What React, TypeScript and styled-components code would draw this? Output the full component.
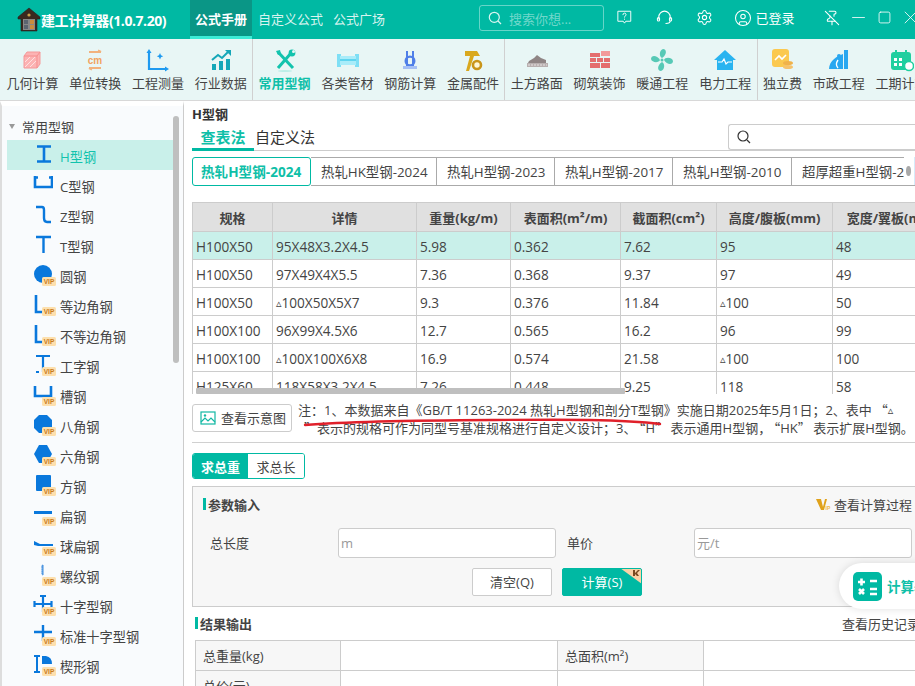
import React from "react";
import styled, { createGlobalStyle } from "styled-components";
import { Settings, CircleUser, PinOff } from "lucide-react";

const TEAL = "#00b9a3";
const FONT = `"Open Sans","Noto Sans CJK SC",sans-serif`;

const Global = createGlobalStyle`
  html, body { margin: 0; padding: 0; background: #fff; overflow: hidden; }
  * { box-sizing: border-box; }
  body { font-family: ${FONT}; font-size: 13px; color: #333; }
`;

const Page = styled.div`
  width: 915px; height: 686px; overflow: hidden; position: relative;
  display: flex; flex-direction: column; background: #fff;
`;

/* ---------- title bar ---------- */
const TitleBar = styled.header`
  height: 39px; flex: none; background: ${TEAL}; display: flex; align-items: stretch; color: #fff; overflow: hidden;
`;
const Brand = styled.div`
  width: 190px; flex: none; display: flex; align-items: center; padding-left: 17px;
  font-size: 14px; font-weight: 700; letter-spacing: -0.42px; white-space: nowrap;
`;
const TopTab = styled.div<{ $on?: boolean }>`
  display: flex; align-items: center; justify-content: center;
  height: 39px; font-size: 13px; white-space: nowrap; flex: none;
  width: ${p => (p.$on ? "62px" : "auto")};
  margin-left: ${p => (p.$on ? "0" : "6px")};
  margin-right: ${p => (p.$on ? "0" : "4px")};
  font-weight: ${p => (p.$on ? 700 : 400)};
  color: ${p => (p.$on ? "#fff" : "rgba(255,255,255,.85)")};
  background: ${p => (p.$on ? "#0a9686" : "transparent")};
  border-bottom: 3px solid ${p => (p.$on ? "#3debd6" : "transparent")};
`;
const SearchTop = styled.div`
  margin: 5px 0 0 90px; width: 125px; height: 26px; flex: none;
  border: 1px solid rgba(255,255,255,.4); border-radius: 3px;
  display: flex; align-items: center; gap: 7px; padding-left: 8px;
  font-size: 13px; color: rgba(255,255,255,.45);
`;
const TopIcons = styled.div`
  display: flex; align-items: center; flex: none; height: 35px;
`;
const TopIcon = styled.span<{ $w: number; $ml?: number }>`
  width: ${p => p.$w}px; margin-left: ${p => p.$ml ?? 0}px; flex: none; display: flex; align-items: center; justify-content: center; gap: 4px;
  font-size: 13px; white-space: nowrap;
`;

/* ---------- toolbar ---------- */
const Toolbar = styled.nav`
  height: 62px; flex: none; background: #e8f6f5; display: flex; align-items: stretch; padding-left: 1px;
  border-bottom: 1px solid #d8d8d8; overflow: hidden;
`;
const ToolGroup = styled.div`
  display: flex; border-right: 1px solid #d0d0d0; flex: none;
  &:last-child { border-right: 0; }
`;
const Tool = styled.div<{ $on?: boolean }>`
  display: flex; flex-direction: column; align-items: center; padding: 9px 5.4px 0; flex: none;
  font-size: 13px; line-height: 18px; white-space: nowrap;
  color: ${p => (p.$on ? "#0fbfa8" : "#444")};
  font-weight: ${p => (p.$on ? 700 : 400)};
  svg { width: 24px; height: 24px; margin-bottom: 2px; display: block; }
`;

/* ---------- body ---------- */
const Body = styled.div`flex: 1; display: flex; min-height: 0;`;
const Sidebar = styled.aside`
  width: 184px; flex: none; position: relative; background: #f9fbfd; padding: 12px 0 0 5px;
  border-left: 2px solid #ddd; border-right: 1px solid #ccc;
  border-top: 5px solid #fff; margin-right: 2px;
`;
const SideHead = styled.div`
  height: 24px; display: flex; align-items: center; gap: 7px; color: #444; font-size: 13px;
  margin-top: -4px; margin-bottom: 2px;
`;
const Caret = styled.i`
  width: 0; height: 0; border-left: 3.5px solid transparent; border-right: 3.5px solid transparent;
  border-top: 5px solid #999; margin-left: 2px;
`;
const SideItem = styled.div<{ $on?: boolean }>`
  width: 166px; height: 30px; display: flex; align-items: center; padding: 2px 0 0 26px; gap: 6px;
  font-size: 13.2px; white-space: nowrap;
  background: ${p => (p.$on ? "#c9f0ea" : "transparent")};
  color: ${p => (p.$on ? "#12c3ad" : "#444")};
`;
const IconBox = styled.span`
  width: 21px; height: 22px; position: relative; flex: none; display: block; margin-top: -2px;
  svg { display: block; }
`;
const Vip = styled.b`
  position: absolute; right: -2px; bottom: 0; height: 9px; width: 14px; background: #fde0ae; color: #c87a1c;
  font: 700 6.5px/9px "Liberation Sans", sans-serif; text-align: center; border-radius: 1.5px;
`;
const SideBarThumb = styled.div`
  position: absolute; left: 171px; top: 10px; width: 6px; height: 247px; background: #bfbfbf; border-radius: 3px;
`;

const Main = styled.main`
  flex: 1; min-width: 0; position: relative; overflow: hidden; padding: 4px 0 0 6px;
`;
const Heading = styled.div`
  font-size: 13px; font-weight: 700; line-height: 18px; color: #333;
`;
const TabRow = styled.div`
  height: 26px; margin-top: 2px; display: flex; align-items: flex-end; border-bottom: 1px solid #ccc; position: relative;
`;
const Tab = styled.div<{ $on?: boolean }>`
  height: 26px; font-size: 15px; line-height: 24px; text-align: center; white-space: nowrap;
  width: ${p => (p.$on ? "62px" : "auto")};
  margin-left: ${p => (p.$on ? 0 : "1px")};
  font-weight: ${p => (p.$on ? 700 : 400)};
  color: ${p => (p.$on ? "#0fbfa8" : "#333")};
  border-bottom: ${p => (p.$on ? "3px solid #00b9a3" : "0")};
  margin-bottom: -1px;
`;
const TabSearch = styled.div`
  position: absolute; left: 536px; top: -1px; width: 200px; height: 26px; border: 1px solid #ccc; border-radius: 3px 0 0 3px;
  border-right: 0; display: flex; align-items: center; padding-left: 8px; background: #fff;
`;
const Segs = styled.div`
  display: flex; margin-top: 6px; height: 30px; overflow: hidden; position: relative;
`;
const Seg = styled.div<{ $on?: boolean; $w: number }>`
  width: ${p => p.$w}px; flex: none; height: 29px; display: flex; align-items: center; padding: 0 0 2px ${p => (p.$on ? 8 : 10)}px;
  font-size: ${p => (p.$on ? 13.6 : 13.4)}px; white-space: nowrap; overflow: hidden; background: #fff;
  border: 1px solid ${p => (p.$on ? "#00b9a3" : "#aaa")};
  border-left-width: ${p => (p.$on ? 1 : 0)}px;
  border-radius: ${p => (p.$on ? "3px" : 0)};
  color: ${p => (p.$on ? "#0fbfa8" : "#444")};
  font-weight: ${p => (p.$on ? 700 : 400)};
`;
const SegHint = styled.div`
  position: absolute; right: 0; top: 0; width: 11px; height: 28px; background: #fff; display: flex; align-items: center;
  border-right: 1px solid #d5ecfb; padding-left: 2px;
  &::before { content: ""; width: 5px; height: 10px; border-radius: 50%; background: #a8a8a8; display: block; }
`;
const TableWrap = styled.div`
  margin-top: 15px; height: 192px; overflow: hidden; position: relative;
`;
const DataTable = styled.table`
  border-collapse: collapse; table-layout: fixed; width: 760px; font-size: 13.6px;
  border-top: 1px solid #ccc; border-left: 1px solid #ccc;
`;
const Th = styled.th<{ $w: number }>`
  width: ${p => p.$w}px; height: 29px; padding: 0; background: #e0e0e0; font-weight: 700; color: #444; border: 1px solid #ccc; font-size: 13px;
  white-space: nowrap; overflow: hidden;
`;
const Tr = styled.tr<{ $on?: boolean }>`
  background: ${p => (p.$on ? "#c9f0ea" : "#fff")};
`;
const Td = styled.td`
  height: 28px; padding: 1px 3px 0; border: 1px solid #ccc; color: #444; white-space: nowrap; overflow: hidden;
`;
const Thumb = styled.div`
  position: absolute; left: 4px; bottom: 0; width: 429px; height: 6px; background: #bfbfbf; border-radius: 1px;
`;
const NoteRow = styled.div`
  display: flex; margin-top: 8px; gap: 6px; height: 41px; border-bottom: 1px solid #d0d0d0; position: relative;
`;
const PicBtn = styled.div`
  width: 100px; height: 28px; flex: none; margin-top: 2px; border: 1px solid #ccc; border-radius: 3px; display: flex; align-items: center;
  padding: 0 0 1px 7px; gap: 5px; font-size: 13px; color: #444;
`;
const Note = styled.div`
  width: 620px; flex: none; font-size: 13px; line-height: 17px; color: #444; margin-top: -1px; white-space: nowrap;
`;
const Tri = styled.span`font-size: 11px; vertical-align: 1px; font-family: "DejaVu Sans", sans-serif;`;
const Quote = styled.span<{ $l?: number; $r?: number }>`
  font-family: "Noto Sans CJK SC", sans-serif;
  margin-left: ${p => p.$l ?? 0}px; margin-right: ${p => p.$r ?? 0}px;
`;
const RedLine = styled.svg`
  position: absolute; left: 0; top: 0; width: 723px; height: 40px; pointer-events: none;
`;
const Mode = styled.div`
  display: flex; width: 113px; height: 26px; margin-top: 10px; border: 1px solid #00b9a3; border-radius: 3px; overflow: hidden;
`;
const ModeBtn = styled.div<{ $on?: boolean }>`
  flex: ${p => (p.$on ? "0 0 55px" : "1")}; display: flex; align-items: center; justify-content: center; font-size: 13px;
  background: ${p => (p.$on ? "#00b9a3" : "#fff")};
  color: ${p => (p.$on ? "#fff" : "#444")}; font-weight: ${p => (p.$on ? 700 : 400)};
`;
const Panel = styled.section`
  margin-top: 7px; height: 121px; background: #f7f7f7; border: 1px solid #ccc; border-right: 0; padding: 8px 0 0 10px;
`;
const SecHead = styled.div`
  display: flex; align-items: center; height: 18px; font-weight: 700; font-size: 13px; color: #444; justify-content: space-between;
`;
const SecTitle = styled.span`
  display: flex; align-items: center; gap: 2px;
  &::before { content: ""; width: 3px; height: 12px; background: #00b9a3; display: block; }
`;
const SecLink = styled.span<{ $mr: number }>`
  display: flex; align-items: center; gap: 3px; font-weight: 400; font-size: 13px; color: #444; white-space: nowrap; margin-right: ${p => p.$mr}px;
`;
const Fields = styled.div`
  display: grid; grid-template-columns: 135px 218px 138px 218px; margin-top: 15px; align-items: center;
`;
const Label = styled.span<{ $pl: number }>`font-size: 13px; color: #444; padding: 0 0 2px ${p => p.$pl}px;`;
const Input = styled.div`
  height: 30px; background: #fff; border: 1px solid #ccc; border-radius: 3px; color: #999; font-size: 13px; display: flex; align-items: center; padding: 0 0 1px 2px;
`;
const Actions = styled.div`
  display: flex; gap: 10px; margin: 10px 0 0 269px;
`;
const Btn = styled.div<{ $pri?: boolean }>`
  width: 80px; height: 28px; border-radius: 2px; display: flex; align-items: center; justify-content: center; font-size: 13px; position: relative;
  padding-bottom: 2px;
  background: ${p => (p.$pri ? "#00b9a3" : "#fff")};
  color: ${p => (p.$pri ? "#fff" : "#444")};
  border: 1px solid ${p => (p.$pri ? "#00b9a3" : "#ccc")};
  overflow: hidden;
`;
const Corner = styled.svg`position: absolute; right: -1px; top: -1px;`;
const Result = styled.section`
  padding: 7px 0 0 3px; width: 730px;
`;
const ResultHead = styled(SecHead)`
  margin-bottom: 8px;
`;
const ResTable = styled.div`
  display: grid; grid-template-columns: 145px 217px 146px 1fr; border-top: 1px solid #ccc; border-left: 1px solid #ccc; width: 730px;
`;
const ResCell = styled.div<{ $key?: boolean }>`
  height: 30px; display: flex; align-items: center; padding-left: 7px; font-size: 13px; color: #444;
  background: ${p => (p.$key ? "#f7f7f7" : "#fff")};
  border-right: 1px solid #ccc; border-bottom: 1px solid #ccc;
`;
const Float = styled.div`
  position: absolute; left: 653px; top: 462px; width: 100px; height: 46px; background: #fff; border-radius: 23px 0 0 23px;
  box-shadow: 0 0 8px rgba(0,0,0,.12); display: flex; align-items: center; padding-left: 14px; gap: 5px;
  color: #0fbfa8; font-weight: 700; font-size: 13.5px; white-space: nowrap; overflow: hidden;
`;

/* ---------- icons ---------- */
const S = (p: React.SVGProps<SVGSVGElement>) => <svg viewBox="0 0 24 24" fill="none" {...p} />;
const W = { stroke: "#fff", strokeWidth: 1.5, strokeLinecap: "round", strokeLinejoin: "round", fill: "none" } as const;

const Logo = () => (
  <svg width="24" height="26" viewBox="0 0 24 26" style={{ flex: "none" }}>
    <path d="M12 1 1 10v2h3v12h16V12h3v-2z" fill="#3a2a20" stroke="#222" strokeWidth=".6" />
    <rect x="6" y="12" width="12" height="11" fill="#888" />
    <rect x="7" y="13" width="4" height="4" fill="#5b6470" />
    <rect x="13" y="13" width="4" height="4" fill="#c98d3c" />
    <rect x="7" y="18" width="4" height="4" fill="#5b6470" />
    <rect x="13" y="18" width="4" height="4" fill="#c98d3c" />
    <circle cx="12" cy="8" r="1.6" fill="#c9a04a" />
  </svg>
);

const icons = {
  cube: <S><path d="M4 8l3-4h13v12l-3 4H4z" fill="#fcb3b3" stroke="#f59a9a" /><path d="M4 8h13v12M17 8l3-4" stroke="#f58f8f" /><path d="M5 14l5-5M5 19l10-10M10 19l6-6" stroke="#fde1e1" /></S>,
  cm: <S><path d="M6 4h12M18 4l-3-1.5M6 20h12M6 20l3 1.5" stroke="#f2b27c" strokeWidth="2" /><text x="12" y="16" textAnchor="middle" fontFamily="Liberation Sans" fontWeight="700" fontSize="10" fill="#f2a35e">cm</text></S>,
  axis: <S><path d="M3 4v17h17" stroke="#1e9af0" strokeWidth="2.2" /><path d="M3 1l-2.5 4h5zM23 21l-4-2.5v5z" fill="#1e9af0" /><path d="M14 5l1 2.2 2.2 1-2.2 1-1 2.2-1-2.2-2.2-1 2.2-1z" fill="#1e9af0" /></S>,
  chart: <S><rect x="3" y="16" width="4" height="6" fill="#14a7b8" /><rect x="10" y="13" width="4" height="9" fill="#14a7b8" /><rect x="17" y="11" width="4" height="11" fill="#14a7b8" /><path d="M3 12l6-5 4 3 7-7" stroke="#14a7b8" strokeWidth="2" /><path d="M16 2h6v6z" fill="#14a7b8" /></S>,
  tools: <S><path d="M5 4l15 16M19 4L5 20" stroke="#12c3ad" strokeWidth="3" /><path d="M3 3l4-1 1 4-3 1z" fill="#12c3ad" /><circle cx="19" cy="5" r="3.4" fill="#12c3ad" /><circle cx="20.5" cy="3.4" r="1.5" fill="#e8f6f5" /><ellipse cx="12" cy="23" rx="7" ry="1" fill="#bdeee7" /></S>,
  beam: <S><rect x="2" y="6" width="4" height="13" fill="#7edff5" /><rect x="20" y="6" width="4" height="13" fill="#7edff5" /><rect x="5" y="8" width="16" height="9" fill="#a9ecf9" /><rect x="5" y="11" width="16" height="2" fill="#5fd5ef" /></S>,
  rebar: <S><path d="M9 3v15M15 3v15" stroke="#4f7fe8" strokeWidth="2" /><circle cx="12" cy="13" r="4.4" stroke="#4f7fe8" strokeWidth="2.2" /><rect x="5" y="18" width="14" height="3" fill="#a5c0f5" /></S>,
  hammer: <S><path d="M4 3h12l3 5h-6l-5 15H5l4-15H4z" fill="#d9a81e" /><circle cx="16" cy="17" r="4" stroke="#c9951a" strokeWidth="2.6" fill="#fff6d5" /></S>,
  road: <S><path d="M4 13l5-3 3-3 4 3 5 2v3H3z" fill="#8f8585" /><rect x="2" y="15" width="21" height="4" fill="#b8b0b0" /><path d="M3 17h19" stroke="#e8e2e2" strokeDasharray="2 1" /></S>,
  brick: <S><g fill="#e46e6e"><rect x="2" y="5" width="10" height="4" /><rect x="13" y="3" width="9" height="5" fill="#f29a9a" /><rect x="2" y="10" width="6" height="4" /><rect x="9" y="10" width="6" height="4" /><rect x="16" y="10" width="6" height="4" /><rect x="2" y="15" width="10" height="5" /><rect x="13" y="15" width="9" height="5" /></g></S>,
  fan: <S><g fill="#57c9b6"><path d="M12 10c-3-1-3-8 1-9 4 0 4 6-1 9z" /><path d="M14 12c1-3 8-3 9 1 0 4-6 4-9-1z" /><path d="M12 14c3 1 3 8-1 9-4 0-4-6 1-9z" /><path d="M10 12c-1 3-8 3-9-1 0-4 6-4 9 1z" /></g><circle cx="12" cy="12" r="1.5" fill="#57c9b6" /></S>,
  house: <S><path d="M12 2L1 12h3v10h16V12h3z" fill="#29b4f0" /><path d="M5 14h4l2-3 2 5 2-2h4" stroke="#fff" strokeWidth="1.2" /></S>,
  fee: <S><rect x="2" y="1" width="17" height="18" rx="3" fill="#fbc94f" /><path d="M5 12l4-4 3 3 4-4" stroke="#fff" strokeWidth="1.6" /><ellipse cx="18" cy="15" rx="5" ry="2" fill="#f0b24a" /><ellipse cx="18" cy="19" rx="5" ry="2" fill="#f5c26b" /></S>,
  muni: <S><path d="M2 21c0-8 8-13 14-15v15z" fill="#29a7f0" /><rect x="17" y="2" width="4" height="19" fill="#29a7f0" /><circle cx="12" cy="8" r="2" fill="#29a7f0" /><path d="M11 12c-2 3-2 6 0 8" stroke="#fff" strokeWidth="1.4" /></S>,
  cal: <S><rect x="1" y="4" width="20" height="18" rx="3" fill="#1fcf9f" /><path d="M6 2v4M16 2v4" stroke="#1fcf9f" strokeWidth="2" /><g fill="#fff"><rect x="4" y="10" width="3" height="3" /><rect x="9" y="10" width="3" height="3" /><rect x="4" y="15" width="3" height="3" /><rect x="9" y="15" width="3" height="3" /></g><circle cx="19" cy="18" r="4.5" fill="#fff" stroke="#1fcf9f" strokeWidth="1.5" /></S>,
};

const toolGroups: [string, keyof typeof icons, boolean?][][] = [
  [["几何计算", "cube"], ["单位转换", "cm"], ["工程测量", "axis"], ["行业数据", "chart"]],
  [["常用型钢", "tools", true], ["各类管材", "beam"], ["钢筋计算", "rebar"], ["金属配件", "hammer"]],
  [["土方路面", "road"], ["砌筑装饰", "brick"], ["暖通工程", "fan"], ["电力工程", "house"]],
  [["独立费", "fee"], ["市政工程", "muni"], ["工期计算", "cal"]],
];

const B = "#0a78dc";
const shapes: Record<string, React.ReactNode> = {
  h: <path d="M4 2.500h14M11 2.500v15M4 17.500h14" stroke={B} strokeWidth="2.600" />,
  c: <path d="M2 2v11h17V2M2 3.500h3M19 3.500h-3" stroke={B} strokeWidth="2.600" />,
  z: <path d="M3 3h6q2 0 2 3v8q0 4 3 4h4" stroke={B} strokeWidth="2.400" />,
  t: <path d="M3 3h15M10.500 3v16" stroke={B} strokeWidth="2.400" />,
  round: <circle cx="10" cy="10" r="9" fill={B} />,
  l: <path d="M3 1v17h6" stroke={B} strokeWidth="2.600" />,
  i: <path d="M3 2h14M10 2v16M3 18h3" stroke={B} strokeWidth="2.200" />,
  u: <path d="M2 2v10h16V2" stroke={B} strokeWidth="2.600" />,
  oct: <path d="M6 1h8l5 5v8l-5 5H6l-5-5V6z" fill={B} />,
  hex: <path d="M6 1h8l5 9-5 9H6l-5-9z" fill={B} />,
  sq: <rect x="3" y="1" width="15" height="16" rx="1" fill={B} />,
  flat: <rect x="1" y="7" width="18" height="3" fill={B} />,
  bulb: <path d="M1 7l6 3h13v2H5l-4-1z" fill={B} />,
  thread: <path d="M9 1l1 1-1 1 1 1-1 1 1 1-1 1 1 1-1 1 1 1-1 1" stroke="#4f96e0" strokeWidth="1.500" />,
  cross: <path d="M10 2v16M1 10h18M7 2h6M1.500 7v6M18.500 7v6" stroke={B} strokeWidth="2.200" />,
  scross: <path d="M10 1v16M1 8h18" stroke={B} strokeWidth="2.400" />,
  wedge: <><path d="M1 2h6M4 2v16M1 18h6" stroke={B} strokeWidth="2" /><path d="M9 2h4q6 1 6 8H9z" fill={B} /></>,
};

const sideItems: [string, string, boolean][] = [
  ["H型钢", "h", false], ["C型钢", "c", false], ["Z型钢", "z", false], ["T型钢", "t", false],
  ["圆钢", "round", true], ["等边角钢", "l", true], ["不等边角钢", "l", true], ["工字钢", "i", true],
  ["槽钢", "u", true], ["八角钢", "oct", true], ["六角钢", "hex", true], ["方钢", "sq", true],
  ["扁钢", "flat", true], ["球扁钢", "bulb", true], ["螺纹钢", "thread", true], ["十字型钢", "cross", true],
  ["标准十字型钢", "scross", true], ["楔形钢", "wedge", true],
];

const segs: [string, number][] = [
  ["热轧H型钢-2024", 119], ["热轧HK型钢-2024", 126], ["热轧H型钢-2023", 118], ["热轧H型钢-2017", 118],
  ["热轧H型钢-2010", 119], ["超厚超重H型钢-2017", 124],
];

const cols: [string, number][] = [
  ["规格", 80], ["详情", 144], ["重量(kg/m)", 94], ["表面积(m²/m)", 110], ["截面积(cm²)", 96], ["高度/腹板(mm)", 116], ["宽度/翼板(mm)", 120],
];

const TriMark = () => <Tri>▵</Tri>;
const rows: React.ReactNode[][] = [
  ["H100X50", "95X48X3.2X4.5", "5.98", "0.362", "7.62", "95", "48"],
  ["H100X50", "97X49X4X5.5", "7.36", "0.368", "9.37", "97", "49"],
  ["H100X50", <><TriMark />100X50X5X7</>, "9.3", "0.376", "11.84", <><TriMark />100</>, "50"],
  ["H100X100", "96X99X4.5X6", "12.7", "0.565", "16.2", "96", "99"],
  ["H100X100", <><TriMark />100X100X6X8</>, "16.9", "0.574", "21.58", <><TriMark />100</>, "100"],
  ["H125X60", "118X58X3.2X4.5", "7.26", "0.448", "9.25", "118", "58"],
];

const VipMark = () => (
  <svg width="15" height="13" viewBox="0 0 15 13"><path d="M0 1h5l2 8 2-8h2l-3 11H5z" fill="#e0a21b" /><text x="9.5" y="12" fontFamily="Liberation Sans" fontWeight="700" fontSize="5" fill="#f0b84a">IP</text></svg>
);

export default function App() {
  return (
    <Page>
      <Global />
      <TitleBar>
        <Brand><Logo />建工计算器(1.0.7.20)</Brand>
        <TopTab $on>公式手册</TopTab>
        <TopTab>自定义公式</TopTab>
        <TopTab>公式广场</TopTab>
        <SearchTop>
          <svg width="14" height="14" viewBox="0 0 14 14" fill="none"><circle cx="6.3" cy="6.3" r="5" stroke="#fff" strokeOpacity=".85" strokeWidth="1.2" /><path d="M10 10l3 3" stroke="#fff" strokeOpacity=".85" strokeWidth="1.2" /></svg>
          搜索你想...
        </SearchTop>
        <TopIcons>
          <TopIcon $w={40}><S width="15" height="15" {...W}><path d="M2 2h20v16h-8l-2 3-2-3H2z" /><path d="M9.500 7.500a2.500 2.500 0 1 1 3.500 2.300c-.7.4-1 .8-1 1.600M12 14.500v.4" /></S></TopIcon>
          <TopIcon $w={40}><S width="17" height="17" {...W}><path d="M4 14V11a8 8 0 0 1 16 0v3" /><rect x="2" y="12" width="3" height="5" rx="1.500" /><rect x="19" y="12" width="3" height="5" rx="1.500" /><path d="M20 17c0 2-3 3.500-6 3.500" /></S></TopIcon>
          <TopIcon $w={40}><Settings size={17} strokeWidth={1.5} /></TopIcon>
          <TopIcon $w={80}><CircleUser size={18} strokeWidth={1.4} />已登录</TopIcon>
          <TopIcon $w={26} $ml={15}><PinOff size={16} strokeWidth={1.6} /></TopIcon>
          <TopIcon $w={26}><S width="13" height="13" {...W}><path d="M1 12h22" /></S></TopIcon>
          <TopIcon $w={26}><S width="13" height="13" {...W}><rect x="2" y="2" width="20" height="20" rx="3" /></S></TopIcon>
          <TopIcon $w={26}><S width="13" height="13" {...W}><path d="M2 2l20 20M22 2L2 22" /></S></TopIcon>
        </TopIcons>
      </TitleBar>

      <Toolbar>
        {toolGroups.map((g, i) => (
          <ToolGroup key={i}>
            {g.map(([t, ic, on]) => (
              <Tool key={t} $on={on}>{icons[ic]}{t}</Tool>
            ))}
          </ToolGroup>
        ))}
      </Toolbar>

      <Body>
        <Sidebar>
          <SideHead><Caret />常用型钢</SideHead>
          {sideItems.map(([t, s, vip], i) => (
            <SideItem key={t} $on={i === 0}>
              <IconBox>
                <svg width="20" height="20" viewBox="0 0 20 20" fill="none">{shapes[s]}</svg>
                {vip && <Vip>VIP</Vip>}
              </IconBox>
              {t}
            </SideItem>
          ))}
          <SideBarThumb />
        </Sidebar>

        <Main>
          <Heading>H型钢</Heading>
          <TabRow>
            <Tab $on>查表法</Tab>
            <Tab>自定义法</Tab>
            <TabSearch>
              <svg width="14" height="14" viewBox="0 0 14 14" fill="none"><circle cx="6" cy="6" r="5" stroke="#333" strokeWidth="1.2" /><path d="M10 10l3 3" stroke="#333" strokeWidth="1.2" /></svg>
            </TabSearch>
          </TabRow>
          <Segs>
            {segs.map(([t, w], i) => <Seg key={t} $w={w} $on={i === 0}>{t}</Seg>)}
            <SegHint />
          </Segs>
          <TableWrap>
            <DataTable>
              <thead><tr>{cols.map(([t, w]) => <Th key={t} $w={w}>{t}</Th>)}</tr></thead>
              <tbody>
                {rows.map((r, i) => (
                  <Tr key={i} $on={i === 0}>{r.map((c, j) => <Td key={j}>{c}</Td>)}</Tr>
                ))}
              </tbody>
            </DataTable>
            <Thumb />
          </TableWrap>
          <NoteRow>
            <PicBtn>
              <svg width="16" height="14" viewBox="0 0 16 14" fill="none"><rect x="1" y="1" width="14" height="12" stroke="#12b8a4" strokeWidth="1.2" /><path d="M1 11l4-4 3 3 3-3 4 4" stroke="#12b8a4" strokeWidth="1.2" /><circle cx="5" cy="4.500" r="1.200" fill="#12b8a4" /></svg>
              查看示意图
            </PicBtn>
            <Note>
              注：1、本数据来自《GB/T 11263-2024 热轧H型钢和剖分T型钢》实施日期2025年5月1日；2、表中<Quote $l={3}>“</Quote><TriMark /><br />
              <Quote $l={6}>”</Quote>表示的规格可作为同型号基准规格进行自定义设计；3、<Quote $l={2.5}>“</Quote>H<Quote $r={2.5}>”</Quote>表示通用H型钢，<Quote $l={2.5}>“</Quote>HK<Quote $r={2.5}>”</Quote>表示扩展H型钢。
            </Note>
            <RedLine viewBox="0 0 723 40" fill="none">
              <path d="M113 23 C150 20 200 18.500 300 18 C370 17.500 430 17 468 22" stroke="#e0202a" strokeWidth="2.400" strokeLinecap="round" />
            </RedLine>
          </NoteRow>
          <Mode>
            <ModeBtn $on>求总重</ModeBtn>
            <ModeBtn>求总长</ModeBtn>
          </Mode>
          <Panel>
            <SecHead>
              <SecTitle>参数输入</SecTitle>
              <SecLink $mr={3}><VipMark />查看计算过程</SecLink>
            </SecHead>
            <Fields>
              <Label $pl={7}>总长度</Label><Input>m</Input>
              <Label $pl={11}>单价</Label><Input>元/t</Input>
            </Fields>
            <Actions>
              <Btn>清空(Q)</Btn>
              <Btn $pri>计算(S)
                <Corner width="22" height="16" viewBox="0 0 22 16"><path d="M0 0h22v16z" fill="#fbd1a6" /><path d="M13 2h2v3l3-3h2l-3 3 2 3h-2l-2-2v2h-2z" fill="#7a4a22" /></Corner>
              </Btn>
            </Actions>
          </Panel>
          <Result>
            <ResultHead>
              <SecTitle>结果输出</SecTitle>
              <SecLink $mr={2}>查看历史记录</SecLink>
            </ResultHead>
            <ResTable>
              <ResCell $key>总重量(kg)</ResCell><ResCell /><ResCell $key>总面积(m²)</ResCell><ResCell />
              <ResCell $key>总价(元)</ResCell><ResCell /><ResCell /><ResCell />
            </ResTable>
          </Result>
          <Float>
            <svg width="29" height="29" viewBox="0 0 29 29"><rect width="29" height="29" rx="5" fill="#00b9a3" /><g stroke="#fff" strokeWidth="2.600"><path d="M5 10h7M8.500 6.500v7M17 9h7M6 17l5 5M11 17l-5 5M17 17h7M17 22h7" /></g></svg>
            计算器
          </Float>
        </Main>
      </Body>
    </Page>
  );
}
